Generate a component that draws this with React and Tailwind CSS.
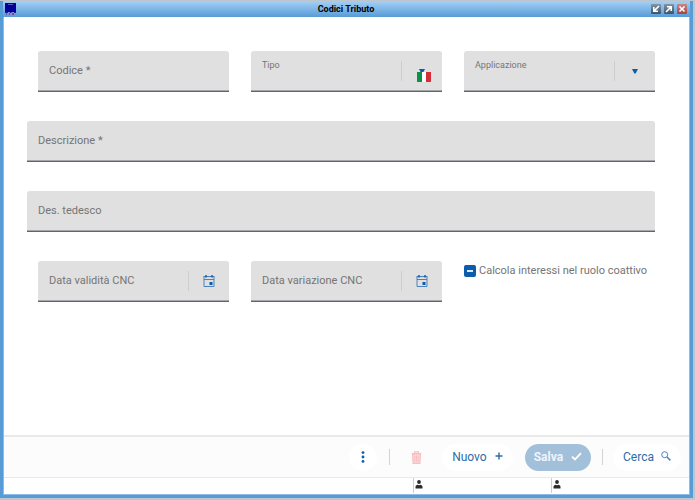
import React, { useEffect, useRef } from 'react';

const Separator = () => <div className="h-4 w-px bg-[#d3d3d3]" />;

const Field = ({ id, label, small, children, end }) => (
  <div className="relative flex h-[41px] items-center rounded-t-[3px] border-b border-[#5f656d] bg-[#e0e0e0] shadow-[inset_0_-1px_0_#a3a7ab]">
    {children}
    <label
      htmlFor={id}
      className={
        small
          ? 'pointer-events-none absolute top-2 left-[11px] text-[9px] leading-3 text-[#757575]'
          : 'pointer-events-none absolute top-3 left-[11px] text-[11px] leading-4 text-[#757575]'
      }
    >
      {label}
    </label>
    {end}
  </div>
);

const TextField = ({ id, label }) => (
  <Field id={id} label={label}>
    <input id={id} type="text" className="h-full w-full bg-transparent px-[11px] text-[11px] outline-none" />
  </Field>
);

const SelectField = ({ id, label, flag }) => (
  <Field
    id={id}
    label={label}
    small
    end={
      <div className="pointer-events-none absolute right-0 flex h-5 w-[41px] items-center justify-center border-l border-[#cdcdcd]">
        <svg width="6" height="5" viewBox="0 0 6 5">
          <path d="M0 0h6L3.6 4.5H2.4z" fill="#0d5cab" />
        </svg>
        {flag && (
          <svg className="absolute top-[11px] left-[15px]" width="14" height="10" viewBox="0 0 14 10">
            <path d="M0 0h5v10H0z" fill="#0b9246" />
            <path d="M5 0h4v10H5z" fill="#fff" />
            <path d="M9 0h5v10H9z" fill="#d22f3a" />
          </svg>
        )}
      </div>
    }
  >
    <select id={id} className="h-full w-full appearance-none bg-transparent px-[11px] text-[11px] outline-none">
      <option value="" />
    </select>
  </Field>
);

const DateField = ({ id, label }) => (
  <Field
    id={id}
    label={label}
    end={
      <button
        type="button"
        aria-label="Calendario"
        className="flex h-5 w-[41px] shrink-0 items-center justify-center border-l border-[#cdcdcd]"
      >
        <svg width="12" height="12" viewBox="0 0 12 12" fill="none">
          <path d="M1 1.5h10v10H1z" stroke="#4a83bb" />
          <path d="M0.5 1.6h11M1 4.5h10" stroke="#4a83bb" />
          <path d="M3 0v2.6M9 0v2.6" stroke="#0d5cab" strokeWidth="1.4" />
          <path d="M6.5 7h3v3h-3z" fill="#0d5cab" />
        </svg>
      </button>
    }
  >
    <input id={id} type="text" className="h-full min-w-0 flex-1 bg-transparent px-[11px] text-[11px] outline-none" />
  </Field>
);

const InterestCheckbox = () => {
  const ref = useRef(null);

  useEffect(() => {
    ref.current.indeterminate = true;
  }, []);

  return (
    <div className="flex h-5 items-center gap-[3px]">
      <span className="relative flex size-3 shrink-0 items-center justify-center">
        <input
          ref={ref}
          id="interessi"
          type="checkbox"
          className="size-3 appearance-none rounded-[2px] bg-[#0d5cab]"
        />
        <span className="pointer-events-none absolute h-0.5 w-1.5 bg-[#dce8f4]" />
      </span>
      <label htmlFor="interessi" className="text-[11px] leading-4 whitespace-nowrap text-[#757575]">
        Calcola interessi nel ruolo coattivo
      </label>
    </div>
  );
};

const WindowButton = ({ label, close, children }) => (
  <button
    type="button"
    aria-label={label}
    className={
      close
        ? 'flex size-2.5 items-center justify-center rounded-[1px] bg-linear-to-b from-[#c98787] to-[#a8403f]'
        : 'flex size-2.5 items-center justify-center rounded-[1px] bg-linear-to-b from-[#8196a8] to-[#3d5468]'
    }
  >
    <svg width="8" height="8" viewBox="0 0 8 8" fill="none" stroke="#fff" strokeWidth="1.6">
      {children}
    </svg>
  </button>
);

const TitleBar = () => (
  <header className="grid h-4 shrink-0 grid-cols-3 items-center bg-linear-to-b from-[#a5d0f5] to-[#579bd7] pr-[3px] pl-0.5">
    <svg width="11" height="12" viewBox="0 0 11 12">
      <path d="M0 0h11v10H0z" fill="#00009a" />
      <path d="M3 1.5h5" stroke="#6f70cf" strokeWidth="0.8" />
      <path d="M0 9h11v3H0z" fill="#8b90cf" />
      <path d="M0 9.5h3M5 9.5h1.5M9 9.5h2M1 11h1M4 11h1M7 11h2" stroke="#1c1c93" />
    </svg>
    <h1 className="text-center text-[9px] leading-4 font-bold text-black">Codici Tributo</h1>
    <div className="flex justify-end gap-[3px]">
      <WindowButton label="Riduci">
        <path d="M7 1 2.4 5.6M1.8 2v4.2H6" />
      </WindowButton>
      <WindowButton label="Ingrandisci">
        <path d="M1 7l4.6-4.6M2 1.8h4.2V6" />
      </WindowButton>
      <WindowButton label="Chiudi" close>
        <path d="M1.5 1.5l5 5M6.5 1.5l-5 5" />
      </WindowButton>
    </div>
  </header>
);

const Toolbar = () => (
  <div className="flex h-[43px] shrink-0 items-center justify-end border-t-2 border-b border-[#e9e9e9] bg-[#fcfcfc] pr-2 text-[12px] text-[#2f6ba8]">
    <button type="button" aria-label="Altro" className="flex h-[27px] w-7 items-center justify-center rounded-full bg-white">
      <svg width="4" height="12" viewBox="0 0 4 12" fill="#0d5cab">
        <circle cx="2" cy="1.6" r="1.4" />
        <circle cx="2" cy="6" r="1.4" />
        <circle cx="2" cy="10.4" r="1.4" />
      </svg>
    </button>
    <div className="ml-3">
      <Separator />
    </div>
    <button type="button" aria-label="Elimina" disabled className="ml-3 flex h-[27px] w-7 items-center justify-center">
      <svg width="11" height="13" viewBox="0 0 11 13" fill="none" stroke="#f8bfc3">
        <path d="M0.5 2.5h10M3.5 2V0.8h4V2" strokeWidth="1.2" />
        <path d="M1.6 3l.5 9.3h6.8L9.4 3z" fill="#fbdadc" strokeWidth="1.2" />
        <path d="M3.8 4.5v6.5M5.5 4.5v6.5M7.2 4.5v6.5" />
      </svg>
    </button>
    <button type="button" className="ml-3 flex h-[27px] items-center gap-2 rounded-full bg-white px-2.5">
      Nuovo
      <svg className="mb-0.5" width="8" height="8" viewBox="0 0 8 8" stroke="#2f6ba8" strokeWidth="1.4">
        <path d="M4 0.5v7M0.5 4h7" />
      </svg>
    </button>
    <button
      type="button"
      disabled
      className="ml-3 flex h-[27px] items-center gap-2 rounded-full bg-[#a3c0da] px-[9px] font-bold text-[#eef4fa]"
    >
      Salva
      <svg className="mb-0.5" width="11" height="9" viewBox="0 0 11 9" fill="none" stroke="#fff" strokeWidth="1.8">
        <path d="M1 4.6 4 7.4 10 1.2" />
      </svg>
    </button>
    <div className="ml-[11px]">
      <Separator />
    </div>
    <button type="button" className="ml-2.5 flex h-[27px] items-center gap-[7px] rounded-full bg-white px-2.5">
      Cerca
      <svg className="mb-0.5" width="10" height="10" viewBox="0 0 10 10" fill="none" stroke="#4a83bb">
        <circle cx="3.7" cy="3.7" r="3" />
        <path d="M6 6l3.4 3.4" strokeWidth="1.5" />
      </svg>
    </button>
  </div>
);

const StatusCell = () => (
  <div className="flex h-[15px] w-[138px] items-center border-l border-[#cfcfcf] pb-0.5 pl-px">
    <svg width="8" height="9" viewBox="0 0 8 9" fill="#2d2d2d">
      <circle cx="4" cy="2" r="1.9" />
      <path d="M0.5 8.5V6.6Q.6 5 2.4 4.7L4 5.2 5.6 4.7Q7.4 5 7.5 6.6v1.9z" />
    </svg>
  </div>
);

export default function App() {
  return (
    <div className="h-screen bg-[#bcc6cf] pt-px pr-0.5 pb-0.5 font-[Roboto,sans-serif]">
      <div className="flex h-full flex-col border-x-3 border-b-3 border-[#579bd7]">
        <TitleBar />
        <main className="flex min-h-0 flex-1 flex-col border-x border-b border-[#8dbce8] bg-white">
          <form className="flex flex-1 flex-col gap-[29px] pt-[34px] pr-[34px] pl-[23px]">
            <div className="grid grid-cols-3 gap-[22px] pl-[11px]">
              <TextField id="codice" label="Codice *" />
              <SelectField id="tipo" label="Tipo" flag />
              <SelectField id="applicazione" label="Applicazione" />
            </div>
            <TextField id="descrizione" label="Descrizione *" />
            <TextField id="tedesco" label="Des. tedesco" />
            <div className="grid grid-cols-3 gap-[22px] pl-[11px]">
              <DateField id="validita" label="Data validità CNC" />
              <DateField id="variazione" label="Data variazione CNC" />
              <InterestCheckbox />
            </div>
          </form>
          <Toolbar />
          <footer className="flex h-4 shrink-0 justify-end">
            <StatusCell />
            <StatusCell />
          </footer>
        </main>
      </div>
    </div>
  );
}
